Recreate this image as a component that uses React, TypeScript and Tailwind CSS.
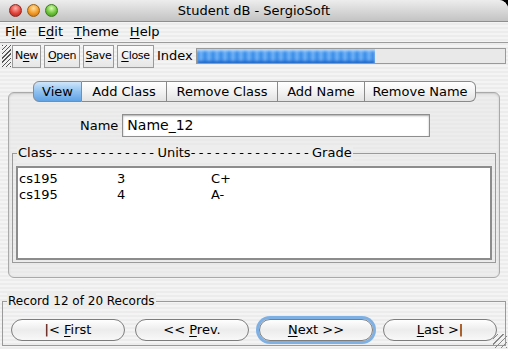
import React from 'react';

const font = { fontFamily: '"DejaVu Sans", "Liberation Sans", sans-serif' };

const pinstripe =
  'bg-[repeating-linear-gradient(0deg,#ececec_0px,#ececec_2px,#f4f4f4_2px,#f4f4f4_4px)]';

const Mn: React.FC<{ pre?: string; u: string; post?: string }> = ({ pre = '', u, post = '' }) => (
  <span>
    {pre}
    <span className="underline underline-offset-2">{u}</span>
    {post}
  </span>
);

const ToolButton: React.FC<{ children: React.ReactNode; w: string }> = ({ children, w }) => (
  <div
    className={`${w} h-[23px] flex items-center justify-center border border-[#9a9a9a] bg-gradient-to-b from-[#fbfbfb] to-[#e6e6e6] text-[11px] tracking-[-0.3px] text-black`}
  >
    {children}
  </div>
);

const Tab: React.FC<{ label: string; w: string; selected?: boolean; first?: boolean; last?: boolean }> = ({
  label,
  w,
  selected,
  first,
  last,
}) => (
  <div
    className={`${w} h-[21px] flex items-center justify-center text-[13px] border-y border-[#8a8a8a] ${
      first ? 'border-l rounded-l-[6px]' : ''
    } ${last ? 'border-r rounded-r-[6px]' : 'border-r'} ${
      selected
        ? 'bg-gradient-to-b from-[#cfe6fb] via-[#8fc1ef] to-[#5fa3e6] border-[#4a6fa0]'
        : 'bg-gradient-to-b from-[#ffffff] via-[#f3f3f3] to-[#e3e3e3]'
    }`}
  >
    {label}
  </div>
);

const NavButton: React.FC<{ children: React.ReactNode; focus?: boolean }> = ({ children, focus }) => (
  <div
    className={`w-[114px] h-[22px] rounded-full flex items-center justify-center text-[13px] border border-[#7d7d7d] bg-gradient-to-b from-[#ffffff] via-[#ececec] to-[#f8f8f8] ${
      focus ? 'ring-[3px] ring-[#7fb0e4]' : ''
    }`}
  >
    {children}
  </div>
);

export default function App() {
  return (
    <div className="w-[508px] h-[349px] bg-black overflow-hidden text-black" style={font}>
      <div className={`w-full h-full rounded-tr-[9px] overflow-hidden flex flex-col ${pinstripe}`}>
        {/* Title bar */}
        <div className="h-[22px] shrink-0 relative flex items-center justify-center bg-gradient-to-b from-[#ededed] to-[#c3c3c3] border-b border-[#8e8e8e]">
          <div className="absolute left-[9px] top-[4px] flex gap-[5px]">
            <div className="w-[13px] h-[13px] rounded-full border border-[#8a2a22] bg-[radial-gradient(circle_at_50%_30%,#ffb0a8,#e0443a_55%,#a5221a)]" />
            <div className="w-[13px] h-[13px] rounded-full border border-[#9a6012] bg-[radial-gradient(circle_at_50%_30%,#ffe0a0,#f29a26_55%,#b8660e)]" />
            <div className="w-[13px] h-[13px] rounded-full border border-[#3d7a1e] bg-[radial-gradient(circle_at_50%_30%,#d8ffb0,#6cc23a_55%,#3c8a1c)]" />
          </div>
          <span className="text-[13px]">Student dB - SergioSoft</span>
        </div>

        {/* Menu bar */}
        <div className="h-[20px] shrink-0 flex items-center gap-[11px] pl-[5px] text-[13px]">
          <Mn pre="F" u="i" post="le" />
          <Mn pre="E" u="d" post="it" />
          <Mn u="T" post="heme" />
          <Mn u="H" post="elp" />
        </div>
        <div className="h-px shrink-0 bg-[#9c9c9c]" />

        {/* Toolbar */}
        <div className="h-[26px] shrink-0 flex items-center pl-[2px]">
          <div className="w-[9px] h-[22px] mr-[1px] bg-[repeating-linear-gradient(135deg,#555_0px,#555_1px,transparent_1px,transparent_3px)]" />
          <div className="flex gap-[3px]">
            <ToolButton w="w-[29px]">
              <Mn pre="N" u="e" post="w" />
            </ToolButton>
            <ToolButton w="w-[36px]">
              <Mn u="O" post="pen" />
            </ToolButton>
            <ToolButton w="w-[31px]">
              <Mn u="S" post="ave" />
            </ToolButton>
            <ToolButton w="w-[37px]">
              <Mn u="C" post="lose" />
            </ToolButton>
          </div>
          <span className="ml-[3px] text-[13px]">Index</span>
          <div className="ml-[3px] w-[310px] h-[16px] border border-[#9a9a9a] bg-[#e9e9e9] flex">
            <div className="w-[178px] h-full bg-[repeating-linear-gradient(90deg,#3d8ee8_0px,#6cb0f5_4px,#3d8ee8_8px)] shadow-[inset_0_2px_3px_#b8dcff,inset_0_-2px_3px_#1f66c8]" />
          </div>
        </div>

        {/* Tabbed pane */}
        <div className="relative mt-[12px] mx-[8px] h-[197px] shrink-0">
          <div className="absolute top-[11px] left-0 right-0 bottom-0 rounded-[6px] border border-[#a9a9a9] bg-[#e8e8e8]/60 shadow-[inset_0_1px_2px_#c8c8c8]" />
          <div className="relative flex pl-[25px]">
            <Tab label="View" w="w-[49px]" selected first />
            <Tab label="Add Class" w="w-[85px]" />
            <Tab label="Remove Class" w="w-[111px]" />
            <Tab label="Add Name" w="w-[87px]" />
            <Tab label="Remove Name" w="w-[111px]" last />
          </div>

          <div className="relative flex items-center mt-[12px] ml-[72px]">
            <span className="text-[13px] mr-[4px]">Name</span>
            <div className="w-[308px] h-[23px] bg-white border border-[#8e8e8e] shadow-[inset_0_1px_2px_#aaa] flex items-center pl-[4px] text-[14px]">
              Name_12
            </div>
          </div>

          {/* Group box with list */}
          <div className="relative mt-[16px] mx-[4px] h-[110px] border border-[#9a9a9a] pt-[12px] px-[3px] pb-[2px]">
            <div className="absolute -top-[9px] left-[4px] px-[1px] text-[13px] leading-[16px] bg-[#ededed]">
              Class<span className="tracking-[3.4px]">-------------</span>Units
              <span className="tracking-[3.4px]">---------------</span>Grade
            </div>
            <div className="h-full bg-white border-[2px] border-double border-[#8c8c8c] text-[13px] leading-[16px] pt-[3px]">
              <div className="flex pl-[1px]">
                <span className="w-[98px]">cs195</span>
                <span className="w-[94px]">3</span>
                <span>C+</span>
              </div>
              <div className="flex pl-[1px]">
                <span className="w-[98px]">cs195</span>
                <span className="w-[94px]">4</span>
                <span>A-</span>
              </div>
            </div>
          </div>
        </div>

        {/* Record group */}
        <div className="relative mt-[23px] mx-[2px] h-[45px] border border-[#9a9a9a] flex items-center gap-[10px] pl-[8px] pt-[13px]">
          <div className="absolute -top-[9px] left-[4px] px-[1px] text-[12px] leading-[16px] bg-[#ededed]">
            Record 12 of 20 Records
          </div>
          <NavButton>
            <Mn pre="|< " u="F" post="irst" />
          </NavButton>
          <NavButton>
            <Mn pre="<< " u="P" post="rev." />
          </NavButton>
          <NavButton focus>
            <Mn u="N" post="ext >>" />
          </NavButton>
          <NavButton>
            <Mn u="L" post="ast >|" />
          </NavButton>
          <div className="absolute right-[-2px] bottom-[-3px] w-[14px] h-[14px] bg-[repeating-linear-gradient(135deg,transparent_0px,transparent_3px,#888_3px,#888_4px)]" />
        </div>
      </div>
    </div>
  );
}
